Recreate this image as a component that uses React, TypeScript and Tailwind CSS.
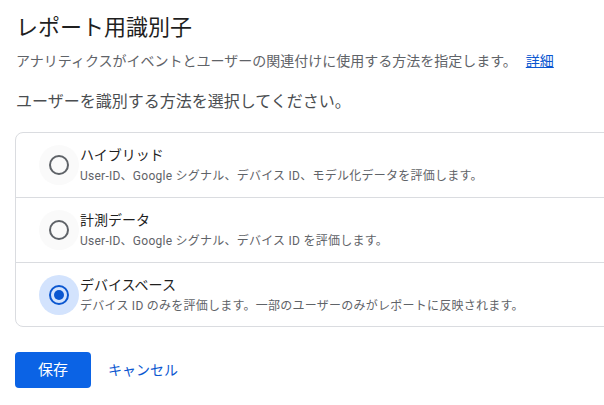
const options = [
  {
    id: "hybrid",
    label: "ハイブリッド",
    desc: "User-ID、Google シグナル、デバイス ID、モデル化データを評価します。",
  },
  {
    id: "observed",
    label: "計測データ",
    desc: "User-ID、Google シグナル、デバイス ID を評価します。",
  },
  {
    id: "device",
    label: "デバイスベース",
    desc: "デバイス ID のみを評価します。一部のユーザーのみがレポートに反映されます。",
  },
];

function Radio({ checked }: { checked: boolean }) {
  return (
    <div
      className={`flex h-10 w-10 shrink-0 items-center justify-center rounded-full ${
        checked ? "bg-[#d3e3fd]" : "bg-[#fafafa]"
      }`}
    >
      <div
        className={`flex h-5 w-5 items-center justify-center rounded-full border-2 ${
          checked ? "border-[#0b57d0]" : "border-[#5f6368]"
        }`}
      >
        {checked && <div className="h-2.5 w-2.5 rounded-full bg-[#0b57d0]" />}
      </div>
    </div>
  );
}

export default function App() {
  const selected = "device";

  return (
    <div
      className="h-[405px] w-[604px] overflow-hidden bg-white pl-4"
      style={{ fontFamily: 'Roboto, "Noto Sans CJK JP", sans-serif' }}
    >
      <h1 className="pt-[14px] text-[22px] leading-[28px] text-[#1f1f1f]">レポート用識別子</h1>
      <p className="mt-[9px] text-[14px] leading-5 text-[#5f6368]">
        アナリティクスがイベントとユーザーの関連付けに使用する方法を指定します。
        <a href="#" className="ml-[9px] text-[#0b57d0] underline">
          詳細
        </a>
      </p>
      <p className="mt-[19px] text-[16px] leading-6 text-[#4a4d50]">
        ユーザーを識別する方法を選択してください。
      </p>

      <div className="mt-[18px] -ml-px w-[640px] rounded-lg border border-[#dadce0]">
        {options.map((o, i) => (
          <div
            key={o.id}
            className={`flex h-[64px] items-center pl-[23px] ${
              i > 0 ? "border-t border-[#dadce0]" : ""
            } ${i === 1 ? "h-[65px]" : ""}`}
          >
            <Radio checked={o.id === selected} />
            <div className="ml-px flex flex-col">
              <span className="text-[14px] leading-5 text-[#1f1f1f]">{o.label}</span>
              <span className="mt-[2px] text-[12px] leading-[18px] tracking-[0.25px] text-[#5f6368]">
                {o.desc}
              </span>
            </div>
          </div>
        ))}
      </div>

      <div className="mt-[25px] flex items-center">
        <button
          type="button"
          className="-ml-px h-9 w-[76px] rounded bg-[#0b63e5] text-[15px] text-white"
        >
          保存
        </button>
        <button type="button" className="ml-[17px] text-[14px] text-[#0b57d0]">
          キャンセル
        </button>
      </div>
    </div>
  );
}
